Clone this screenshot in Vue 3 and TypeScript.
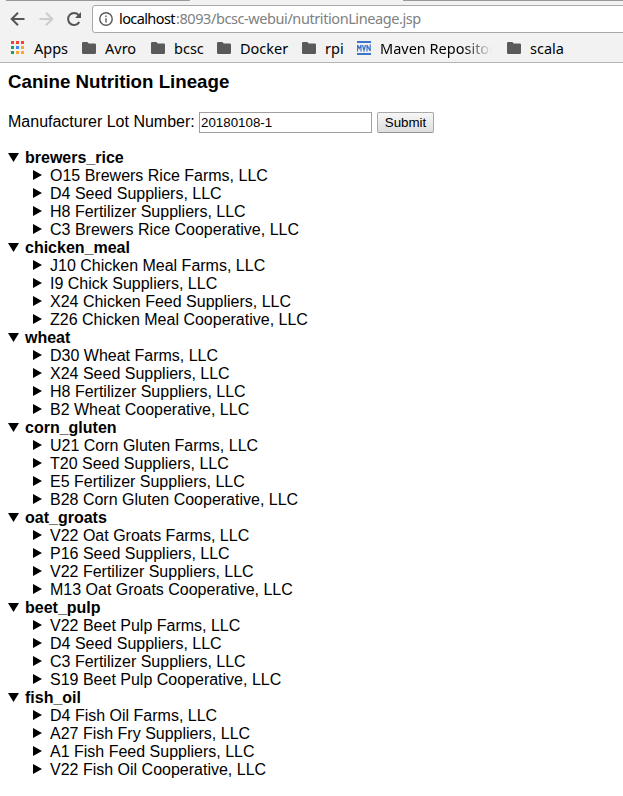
<script setup lang="ts">
import { ref } from 'vue'

interface Bookmark { label: string; kind: 'apps' | 'folder' | 'mvn'; name: string }
interface Ingredient { name: string; sources: string[] }

const lot = ref('20180108-1')

const bookmarks: Bookmark[] = [
  { label: 'Apps', kind: 'apps', name: 'apps' },
  { label: 'Avro', kind: 'folder', name: 'avro' },
  { label: 'bcsc', kind: 'folder', name: 'bcsc' },
  { label: 'Docker', kind: 'folder', name: 'docker' },
  { label: 'rpi', kind: 'folder', name: 'rpi' },
  { label: 'Maven Repositor', kind: 'mvn', name: 'maven' },
  { label: 'scala', kind: 'folder', name: 'scala' },
]

const appCells: [number, number, string][] = [
  [0, 0, '#f44336'], [5, 0, '#f44336'], [10, 0, '#f44336'],
  [0, 5, '#1fa05a'], [5, 5, '#4285f4'], [10, 5, '#fba733'],
  [0, 10, '#1fa05a'], [5, 10, '#fba733'], [10, 10, '#fba733'],
]

const ingredients: Ingredient[] = [
  { name: 'brewers_rice', sources: ['O15 Brewers Rice Farms, LLC', 'D4 Seed Suppliers, LLC', 'H8 Fertilizer Suppliers, LLC', 'C3 Brewers Rice Cooperative, LLC'] },
  { name: 'chicken_meal', sources: ['J10 Chicken Meal Farms, LLC', 'I9 Chick Suppliers, LLC', 'X24 Chicken Feed Suppliers, LLC', 'Z26 Chicken Meal Cooperative, LLC'] },
  { name: 'wheat', sources: ['D30 Wheat Farms, LLC', 'X24 Seed Suppliers, LLC', 'H8 Fertilizer Suppliers, LLC', 'B2 Wheat Cooperative, LLC'] },
  { name: 'corn_gluten', sources: ['U21 Corn Gluten Farms, LLC', 'T20 Seed Suppliers, LLC', 'E5 Fertilizer Suppliers, LLC', 'B28 Corn Gluten Cooperative, LLC'] },
  { name: 'oat_groats', sources: ['V22 Oat Groats Farms, LLC', 'P16 Seed Suppliers, LLC', 'V22 Fertilizer Suppliers, LLC', 'M13 Oat Groats Cooperative, LLC'] },
  { name: 'beet_pulp', sources: ['V22 Beet Pulp Farms, LLC', 'D4 Seed Suppliers, LLC', 'C3 Fertilizer Suppliers, LLC', 'S19 Beet Pulp Cooperative, LLC'] },
  { name: 'fish_oil', sources: ['D4 Fish Oil Farms, LLC', 'A27 Fish Fry Suppliers, LLC', 'A1 Fish Feed Suppliers, LLC', 'V22 Fish Oil Cooperative, LLC'] },
]
</script>

<template>
  <div class="window">
    <header class="chrome">
      <div class="tab-edge"><span class="edge-left"></span><span class="edge-right"></span></div>
      <div class="toolbar">
        <svg class="nav back" width="16" height="16" viewBox="0 0 16 16"><path d="M14.5 8H2M8 1.7L1.7 8L8 14.3" /></svg>
        <svg class="nav forward" width="16" height="16" viewBox="0 0 16 16"><path d="M1.5 8H14M8 1.7L14.3 8L8 14.3" /></svg>
        <svg class="nav reload" width="16" height="16" viewBox="0 0 16 16"><path d="M13.3 11A6 6 0 1 1 12.6 4" /><path class="solid" d="M15 1V7H9Z" /></svg>
        <div class="address">
          <svg class="info" width="14" height="14" viewBox="0 0 14 14"><circle cx="7" cy="7" r="6.2" /><path d="M7 6.2V10.6M7 3.4V5" /></svg>
          <span class="host">localhost</span><span class="path">:8093/bcsc-webui/nutritionLineage.jsp</span>
        </div>
      </div>
      <nav class="bookmarks">
        <a v-for="b in bookmarks" :key="b.name" class="bookmark" :class="b.name">
          <svg v-if="b.kind === 'apps'" width="13" height="13" viewBox="0 0 13 13" class="apps-icon" shape-rendering="crispEdges">
            <rect v-for="(c, i) in appCells" :key="i" :x="c[0]" :y="c[1]" width="3" height="3" :fill="c[2]" />
          </svg>
          <svg v-else-if="b.kind === 'folder'" width="14" height="12" viewBox="0 0 14 12"><path fill="#5a5a5a" d="M1.2 0H5.3L6.8 1.6H12.8Q14 1.6 14 2.8V10.8Q14 12 12.8 12H1.2Q0 12 0 10.8V1.2Q0 0 1.2 0Z" /></svg>
          <svg v-else width="14" height="14" viewBox="0 0 14 14" fill="none" stroke="#3b74c8"><path stroke-width="2" d="M0 1H14M0 13H14" /><path stroke-width="1.2" d="M.6 10.5V4L2.3 7.5L4 4V10.5M5.5 4L7 9.5L8.5 4M10 10.5V4L13.2 10V3.5" /></svg>
          <span class="label">{{ b.label }}</span>
        </a>
      </nav>
    </header>
    <main class="page">
      <h3>Canine Nutrition Lineage</h3>
      <form class="lookup" @submit.prevent>
        <label for="lot">Manufacturer Lot Number:</label>
        <input id="lot" v-model="lot" type="text" />
        <button type="submit">Submit</button>
      </form>
      <ul class="tree">
        <li v-for="item in ingredients" :key="item.name">
          <div class="row parent">
            <svg width="11" height="9" viewBox="0 0 11 9"><path d="M0 0H11L5.5 9Z" /></svg><span>{{ item.name }}</span>
          </div>
          <div v-for="s in item.sources" :key="s" class="row child">
            <svg width="9" height="10" viewBox="0 0 9 10"><path d="M0 0L9 5L0 10Z" /></svg><span>{{ s }}</span>
          </div>
        </li>
      </ul>
    </main>
  </div>
</template>

<style>
body { margin: 0; background: #fff; }
</style>

<style scoped>
.window { width: 100%; height: 796px; overflow: hidden; background: #fff; color: #000; font: 16px/18px "Liberation Sans", Arial, sans-serif; }
.chrome { box-sizing: border-box; height: 63px; background: #f2f2f2; border-bottom: 1px solid #b4b4b4; font-family: "Noto Sans", "Open Sans", sans-serif; overflow: hidden; }
.tab-edge { display: flex; justify-content: space-between; height: 1px; }
.edge-left { width: 184px; margin-left: 6px; background: #999; }
.edge-right { width: 220px; background: #999; }
.toolbar { display: flex; align-items: center; height: 32px; padding-top: 4px; box-sizing: border-box; }
.nav { flex: none; fill: none; stroke: #555; stroke-width: 2; }
.back { margin-left: 10px; }
.forward { margin-left: 12px; stroke: #ccc; }
.reload { margin-left: 12px; }
.solid { fill: #555; stroke: none; }
.address { box-sizing: border-box; display: flex; align-items: center; flex: 1; height: 28px; margin: 0 -4px 0 10px; padding-left: 6px; border: 1px solid #a9a9a9; border-radius: 3px; background: #fff; font-size: 14.5px; line-height: 20px; white-space: nowrap; }
.info { flex: none; margin-right: 6px; fill: none; stroke: #5a5a5a; stroke-width: 1.4; }
.host, .path { padding-bottom: 2px; }
.host { width: 57px; letter-spacing: -.6px; }
.path { color: #808080; letter-spacing: -.42px; }
.bookmarks { display: flex; align-items: center; height: 29px; padding-left: 11px; font-size: 14.5px; line-height: 20px; }
.bookmark { display: flex; align-items: center; flex: none; white-space: nowrap; }
.bookmark svg { flex: none; margin-right: 9px; }
.bookmark .apps-icon { margin-right: 10px; }
.apps { width: 71px; }
.avro { width: 69px; }
.bcsc { width: 66px; }
.docker { width: 85px; }
.rpi { width: 55px; }
.maven { width: 150px; }
.maven .label { -webkit-mask-image: linear-gradient(to right, #000 84px, transparent 112px); mask-image: linear-gradient(to right, #000 84px, transparent 112px); }
.page { padding: 9px 8px 0; }
h3 { margin: 0; font-size: 18.72px; line-height: 20px; }
.lookup { display: flex; align-items: center; height: 22px; margin-top: 19px; }
label { width: 191px; white-space: nowrap; }
input { box-sizing: border-box; width: 173px; height: 21px; margin: 0; padding: 1px; border: 1px solid #a0a0a0; border-radius: 0; background: #fff; color: #000; font: 13.333px "Liberation Sans", Arial, sans-serif; outline: none; }
button { box-sizing: border-box; width: 57px; height: 21px; margin: 0 0 0 5px; padding: 0; border: 1px solid #a9a9a9; border-bottom-color: #929292; border-radius: 2px; background: linear-gradient(#f6f6f6, #dedede); color: #000; font: 13.333px "Liberation Sans", Arial, sans-serif; }
.tree { margin: 16px 0 0; padding: 0; list-style: none; }
.row { display: flex; align-items: center; height: 18px; white-space: nowrap; }
.parent { font-weight: bold; }
.parent svg { margin: 0 6px 1px 0; }
.child { padding-left: 25px; }
.child svg { margin: 0 8px 2px 0; }
</style>
